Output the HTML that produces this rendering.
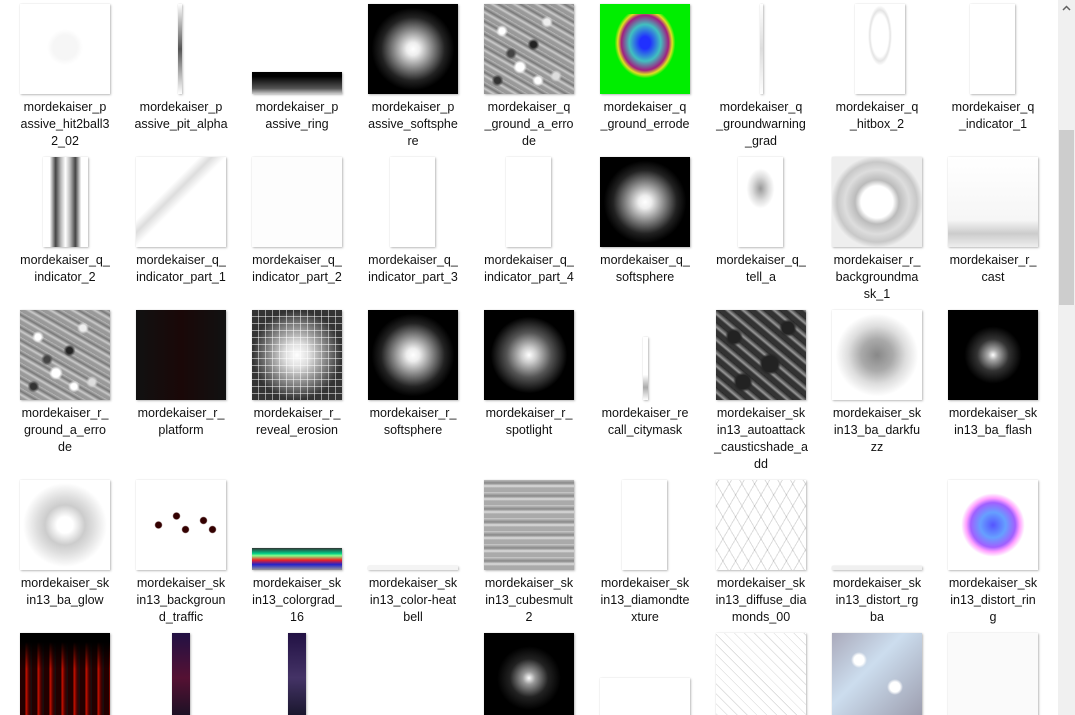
<!DOCTYPE html>
<html><head><meta charset="utf-8"><style>
*{margin:0;padding:0;box-sizing:border-box}
html,body{width:1075px;height:715px;overflow:hidden}
body{background:#fff;position:relative;font-family:"Liberation Sans","Noto Sans CJK SC",sans-serif}
.t{position:absolute;box-shadow:1px 1px 2px rgba(0,0,0,.25),0 0 1px rgba(0,0,0,.15);background:#fff;overflow:hidden}
.l{position:absolute;width:116px;text-align:center;font-size:12.5px;line-height:17px;color:#111;white-space:nowrap}
.noise{background:
radial-gradient(circle at 20% 30%,#fff 0 3px,transparent 6px),
radial-gradient(circle at 70% 20%,#eee 0 3px,transparent 6px),
radial-gradient(circle at 40% 70%,#fff 0 4px,transparent 7px),
radial-gradient(circle at 80% 80%,#ddd 0 3px,transparent 6px),
radial-gradient(circle at 55% 45%,#222 0 3px,transparent 6px),
radial-gradient(circle at 15% 85%,#333 0 3px,transparent 6px),
radial-gradient(circle at 60% 85%,#fff 0 3px,transparent 6px),
radial-gradient(circle at 30% 55%,#444 0 3px,transparent 6px),
repeating-linear-gradient(30deg,#999 0 3px,#ccc 5px,#777 8px,#bbb 11px);}
.rad{background:radial-gradient(circle at 50% 50%,#fff 0,#eee 10%,#888 30%,#222 50%,#000 65%)}
</style></head><body>

<!-- row 1 -->
<div class="t" style="left:20px;top:4px;width:90px;height:90px;background:radial-gradient(circle at 50% 48%,#f6f6f6 0 12px,#fff 18px)"></div>
<div class="t" style="left:178px;top:4px;width:4px;height:90px;background:linear-gradient(#fff,#555 50%,#fff)"></div>
<div class="t" style="left:252px;top:72px;width:90px;height:22px;background:linear-gradient(#000 20%,#555 75%,#ccc)"></div>
<div class="t rad" style="left:368px;top:4px;width:90px;height:90px"></div>
<div class="t noise" style="left:484px;top:4px;width:90px;height:90px"></div>
<div class="t" style="left:600px;top:4px;width:90px;height:90px;background:#00ee00">
 <div style="position:absolute;left:8px;top:10px;width:74px;height:72px;background:radial-gradient(ellipse at 50% 40%,#2030ff 0 10%,#40c0c0 30%,#a02080 45%,#e0e020 52%,transparent 58%)"></div></div>
<div class="t" style="left:760px;top:4px;width:3px;height:90px;background:linear-gradient(#fff,#ddd 50%,#fff)"></div>
<div class="t" style="left:855px;top:4px;width:50px;height:90px;background:radial-gradient(ellipse 12px 30px at 50% 35%,#fff 0 70%,#e4e4e4 85%,#fff 100%)"></div>
<div class="t" style="left:970px;top:4px;width:45px;height:90px"></div>

<div class="l" style="left:7px;top:99px">mordekaiser_p<br>assive_hit2ball3<br>2_02</div>
<div class="l" style="left:123px;top:99px">mordekaiser_p<br>assive_pit_alpha</div>
<div class="l" style="left:239px;top:99px">mordekaiser_p<br>assive_ring</div>
<div class="l" style="left:355px;top:99px">mordekaiser_p<br>assive_softsphe<br>re</div>
<div class="l" style="left:471px;top:99px">mordekaiser_q<br>_ground_a_erro<br>de</div>
<div class="l" style="left:587px;top:99px">mordekaiser_q<br>_ground_errode</div>
<div class="l" style="left:703px;top:99px">mordekaiser_q<br>_groundwarning<br>_grad</div>
<div class="l" style="left:819px;top:99px">mordekaiser_q<br>_hitbox_2</div>
<div class="l" style="left:935px;top:99px">mordekaiser_q<br>_indicator_1</div>

<!-- row 2 -->
<div class="t" style="left:43px;top:157px;width:45px;height:90px;background:linear-gradient(90deg,#fff 15%,#444 28%,#bbb 40%,#fff 50%,#bbb 60%,#444 72%,#fff 85%)"></div>
<div class="t" style="left:136px;top:157px;width:90px;height:90px;background:linear-gradient(135deg,#fff 35%,#ddd 42%,#fff 50%)"></div>
<div class="t" style="left:252px;top:157px;width:90px;height:90px;background:#fdfdfd"></div>
<div class="t" style="left:390px;top:157px;width:45px;height:90px"></div>
<div class="t" style="left:506px;top:157px;width:45px;height:90px"></div>
<div class="t rad" style="left:600px;top:157px;width:90px;height:90px"></div>
<div class="t" style="left:738px;top:157px;width:45px;height:90px;background:radial-gradient(ellipse 14px 20px at 50% 35%,#999 0,#ddd 60%,#fff 100%)"></div>
<div class="t" style="left:832px;top:157px;width:90px;height:90px;background:radial-gradient(circle at 50% 50%,#fff 0 16px,#bbb 22px,#ddd 32px,#c8c8c8 40px,#eee 46px)"></div>
<div class="t" style="left:948px;top:157px;width:90px;height:90px;background:linear-gradient(#fff 0,#f6f6f6 70%,#ccc 85%,#eee)"></div>

<div class="l" style="left:7px;top:252px">mordekaiser_q_<br>indicator_2</div>
<div class="l" style="left:123px;top:252px">mordekaiser_q_<br>indicator_part_1</div>
<div class="l" style="left:239px;top:252px">mordekaiser_q_<br>indicator_part_2</div>
<div class="l" style="left:355px;top:252px">mordekaiser_q_<br>indicator_part_3</div>
<div class="l" style="left:471px;top:252px">mordekaiser_q_<br>indicator_part_4</div>
<div class="l" style="left:587px;top:252px">mordekaiser_q_<br>softsphere</div>
<div class="l" style="left:703px;top:252px">mordekaiser_q_<br>tell_a</div>
<div class="l" style="left:819px;top:252px">mordekaiser_r_<br>backgroundma<br>sk_1</div>
<div class="l" style="left:935px;top:252px">mordekaiser_r_<br>cast</div>

<!-- row 3 -->
<div class="t noise" style="left:20px;top:310px;width:90px;height:90px"></div>
<div class="t" style="left:136px;top:310px;width:90px;height:90px;background:linear-gradient(90deg,#111,#1a0808 50%,#111)"></div>
<div class="t" style="left:252px;top:310px;width:90px;height:90px;background:radial-gradient(circle,#fff 0,#ddd 20%,#777 50%,#333 70%),#333"><div style="position:absolute;inset:0;background:repeating-linear-gradient(90deg,transparent 0 6px,rgba(255,255,255,.5) 6px 7px),repeating-linear-gradient(0deg,transparent 0 6px,rgba(255,255,255,.5) 6px 7px)"></div></div>
<div class="t rad" style="left:368px;top:310px;width:90px;height:90px"></div>
<div class="t" style="left:484px;top:310px;width:90px;height:90px;background:radial-gradient(circle,#fff 0,#ccc 12%,#555 35%,#000 60%)"></div>
<div class="t" style="left:643px;top:337px;width:5px;height:63px;background:linear-gradient(#fff 60%,#aaa 80%,#fff)"></div>
<div class="t" style="left:716px;top:310px;width:90px;height:90px;background:radial-gradient(circle at 20% 30%,#222 0 6px,transparent 9px),radial-gradient(circle at 60% 60%,#222 0 8px,transparent 11px),radial-gradient(circle at 80% 20%,#222 0 6px,transparent 9px),radial-gradient(circle at 30% 80%,#222 0 7px,transparent 10px),repeating-linear-gradient(40deg,#333 0 4px,#999 6px,#222 10px)"></div>
<div class="t" style="left:832px;top:310px;width:90px;height:90px;background:radial-gradient(circle,#888 0,#aaa 25%,#ddd 45%,#fff 65%)"></div>
<div class="t" style="left:948px;top:310px;width:90px;height:90px;background:radial-gradient(circle,#fff 0,#aaa 8%,#333 25%,#000 45%)"></div>

<div class="l" style="left:7px;top:405px">mordekaiser_r_<br>ground_a_erro<br>de</div>
<div class="l" style="left:123px;top:405px">mordekaiser_r_<br>platform</div>
<div class="l" style="left:239px;top:405px">mordekaiser_r_<br>reveal_erosion</div>
<div class="l" style="left:355px;top:405px">mordekaiser_r_<br>softsphere</div>
<div class="l" style="left:471px;top:405px">mordekaiser_r_<br>spotlight</div>
<div class="l" style="left:587px;top:405px">mordekaiser_re<br>call_citymask</div>
<div class="l" style="left:703px;top:405px">mordekaiser_sk<br>in13_autoattack<br>_causticshade_a<br>dd</div>
<div class="l" style="left:819px;top:405px">mordekaiser_sk<br>in13_ba_darkfu<br>zz</div>
<div class="l" style="left:935px;top:405px">mordekaiser_sk<br>in13_ba_flash</div>

<!-- row 4 -->
<div class="t" style="left:20px;top:480px;width:90px;height:90px;background:radial-gradient(circle,#fff 0 8px,#ccc 20px,#ddd 28px,#fff 42px)"></div>
<div class="t" style="left:136px;top:480px;width:90px;height:90px;background:radial-gradient(circle at 25% 50%,#300 0 3px,transparent 4px),radial-gradient(circle at 45% 40%,#300 0 3px,transparent 4px),radial-gradient(circle at 55% 55%,#300 0 3px,transparent 4px),radial-gradient(circle at 75% 45%,#300 0 3px,transparent 4px),radial-gradient(circle at 85% 55%,#300 0 3px,transparent 4px),#fff"></div>
<div class="t" style="left:252px;top:548px;width:90px;height:22px;background:linear-gradient(#333,#0c8 25%,#8f8 35%,#e22 55%,#22c 75%,#999)"></div>
<div class="t" style="left:368px;top:566px;width:90px;height:4px;background:#f4f4f4"></div>
<div class="t" style="left:484px;top:480px;width:90px;height:90px;background:repeating-linear-gradient(0deg,#aaa 0 4px,#ddd 6px,#888 9px,#ccc 13px)"></div>
<div class="t" style="left:622px;top:480px;width:45px;height:90px"></div>
<div class="t" style="left:716px;top:480px;width:90px;height:90px;background:repeating-linear-gradient(60deg,#fff 0 10px,#ddd 10px 11px),repeating-linear-gradient(-60deg,#fff 0 10px,#ddd 10px 11px);background-blend-mode:multiply"></div>
<div class="t" style="left:832px;top:566px;width:90px;height:4px;background:#f0f0f0"></div>
<div class="t" style="left:948px;top:480px;width:90px;height:90px;background:radial-gradient(circle at 50% 50%,#55f 0,#66a0ff 20%,#a060ff 35%,#ffa0ff 42%,#fff 50%)"></div>

<div class="l" style="left:7px;top:575px">mordekaiser_sk<br>in13_ba_glow</div>
<div class="l" style="left:123px;top:575px">mordekaiser_sk<br>in13_backgroun<br>d_traffic</div>
<div class="l" style="left:239px;top:575px">mordekaiser_sk<br>in13_colorgrad_<br>16</div>
<div class="l" style="left:355px;top:575px">mordekaiser_sk<br>in13_color-heat<br>bell</div>
<div class="l" style="left:471px;top:575px">mordekaiser_sk<br>in13_cubesmult<br>2</div>
<div class="l" style="left:587px;top:575px">mordekaiser_sk<br>in13_diamondte<br>xture</div>
<div class="l" style="left:703px;top:575px">mordekaiser_sk<br>in13_diffuse_dia<br>monds_00</div>
<div class="l" style="left:819px;top:575px">mordekaiser_sk<br>in13_distort_rg<br>ba</div>
<div class="l" style="left:935px;top:575px">mordekaiser_sk<br>in13_distort_rin<br>g</div>

<!-- row 5 -->
<div class="t" style="left:20px;top:633px;width:90px;height:90px;background:linear-gradient(#000 10%,transparent 40%),repeating-linear-gradient(90deg,#200 0 5px,#c10 6px,#400 9px,#111 12px)"></div>
<div class="t" style="left:172px;top:633px;width:18px;height:90px;background:linear-gradient(#214,#513 50%,#112)"></div>
<div class="t" style="left:288px;top:633px;width:18px;height:90px;background:linear-gradient(#214,#436 50%,#112)"></div>
<div class="t" style="left:484px;top:633px;width:90px;height:90px;background:radial-gradient(circle,#fff 0,#999 10%,#222 30%,#000 50%)"></div>
<div class="t" style="left:600px;top:678px;width:90px;height:45px"></div>
<div class="t" style="left:716px;top:633px;width:90px;height:90px;background:repeating-linear-gradient(45deg,#fff 0 6px,#ccc 7px)"></div>
<div class="t" style="left:832px;top:633px;width:90px;height:90px;background:radial-gradient(circle at 30% 30%,#fff 0 5px,transparent 8px),radial-gradient(circle at 70% 60%,#fff 0 5px,transparent 8px),linear-gradient(135deg,#aab 0,#cde 40%,#99a)"></div>
<div class="t" style="left:948px;top:633px;width:90px;height:90px;background:#fafafa"></div>

<!-- scrollbar -->
<div style="position:absolute;left:1058px;top:0;width:17px;height:715px;background:#f0f0f0"></div>
<div style="position:absolute;left:1059px;top:130px;width:15px;height:175px;background:#cdcdcd"></div>
<svg style="position:absolute;left:1061px;top:4px" width="11" height="8"><path d="M2 6 L5.5 2.5 L9 6" stroke="#606060" stroke-width="1.5" fill="none"/></svg>
</body></html>
